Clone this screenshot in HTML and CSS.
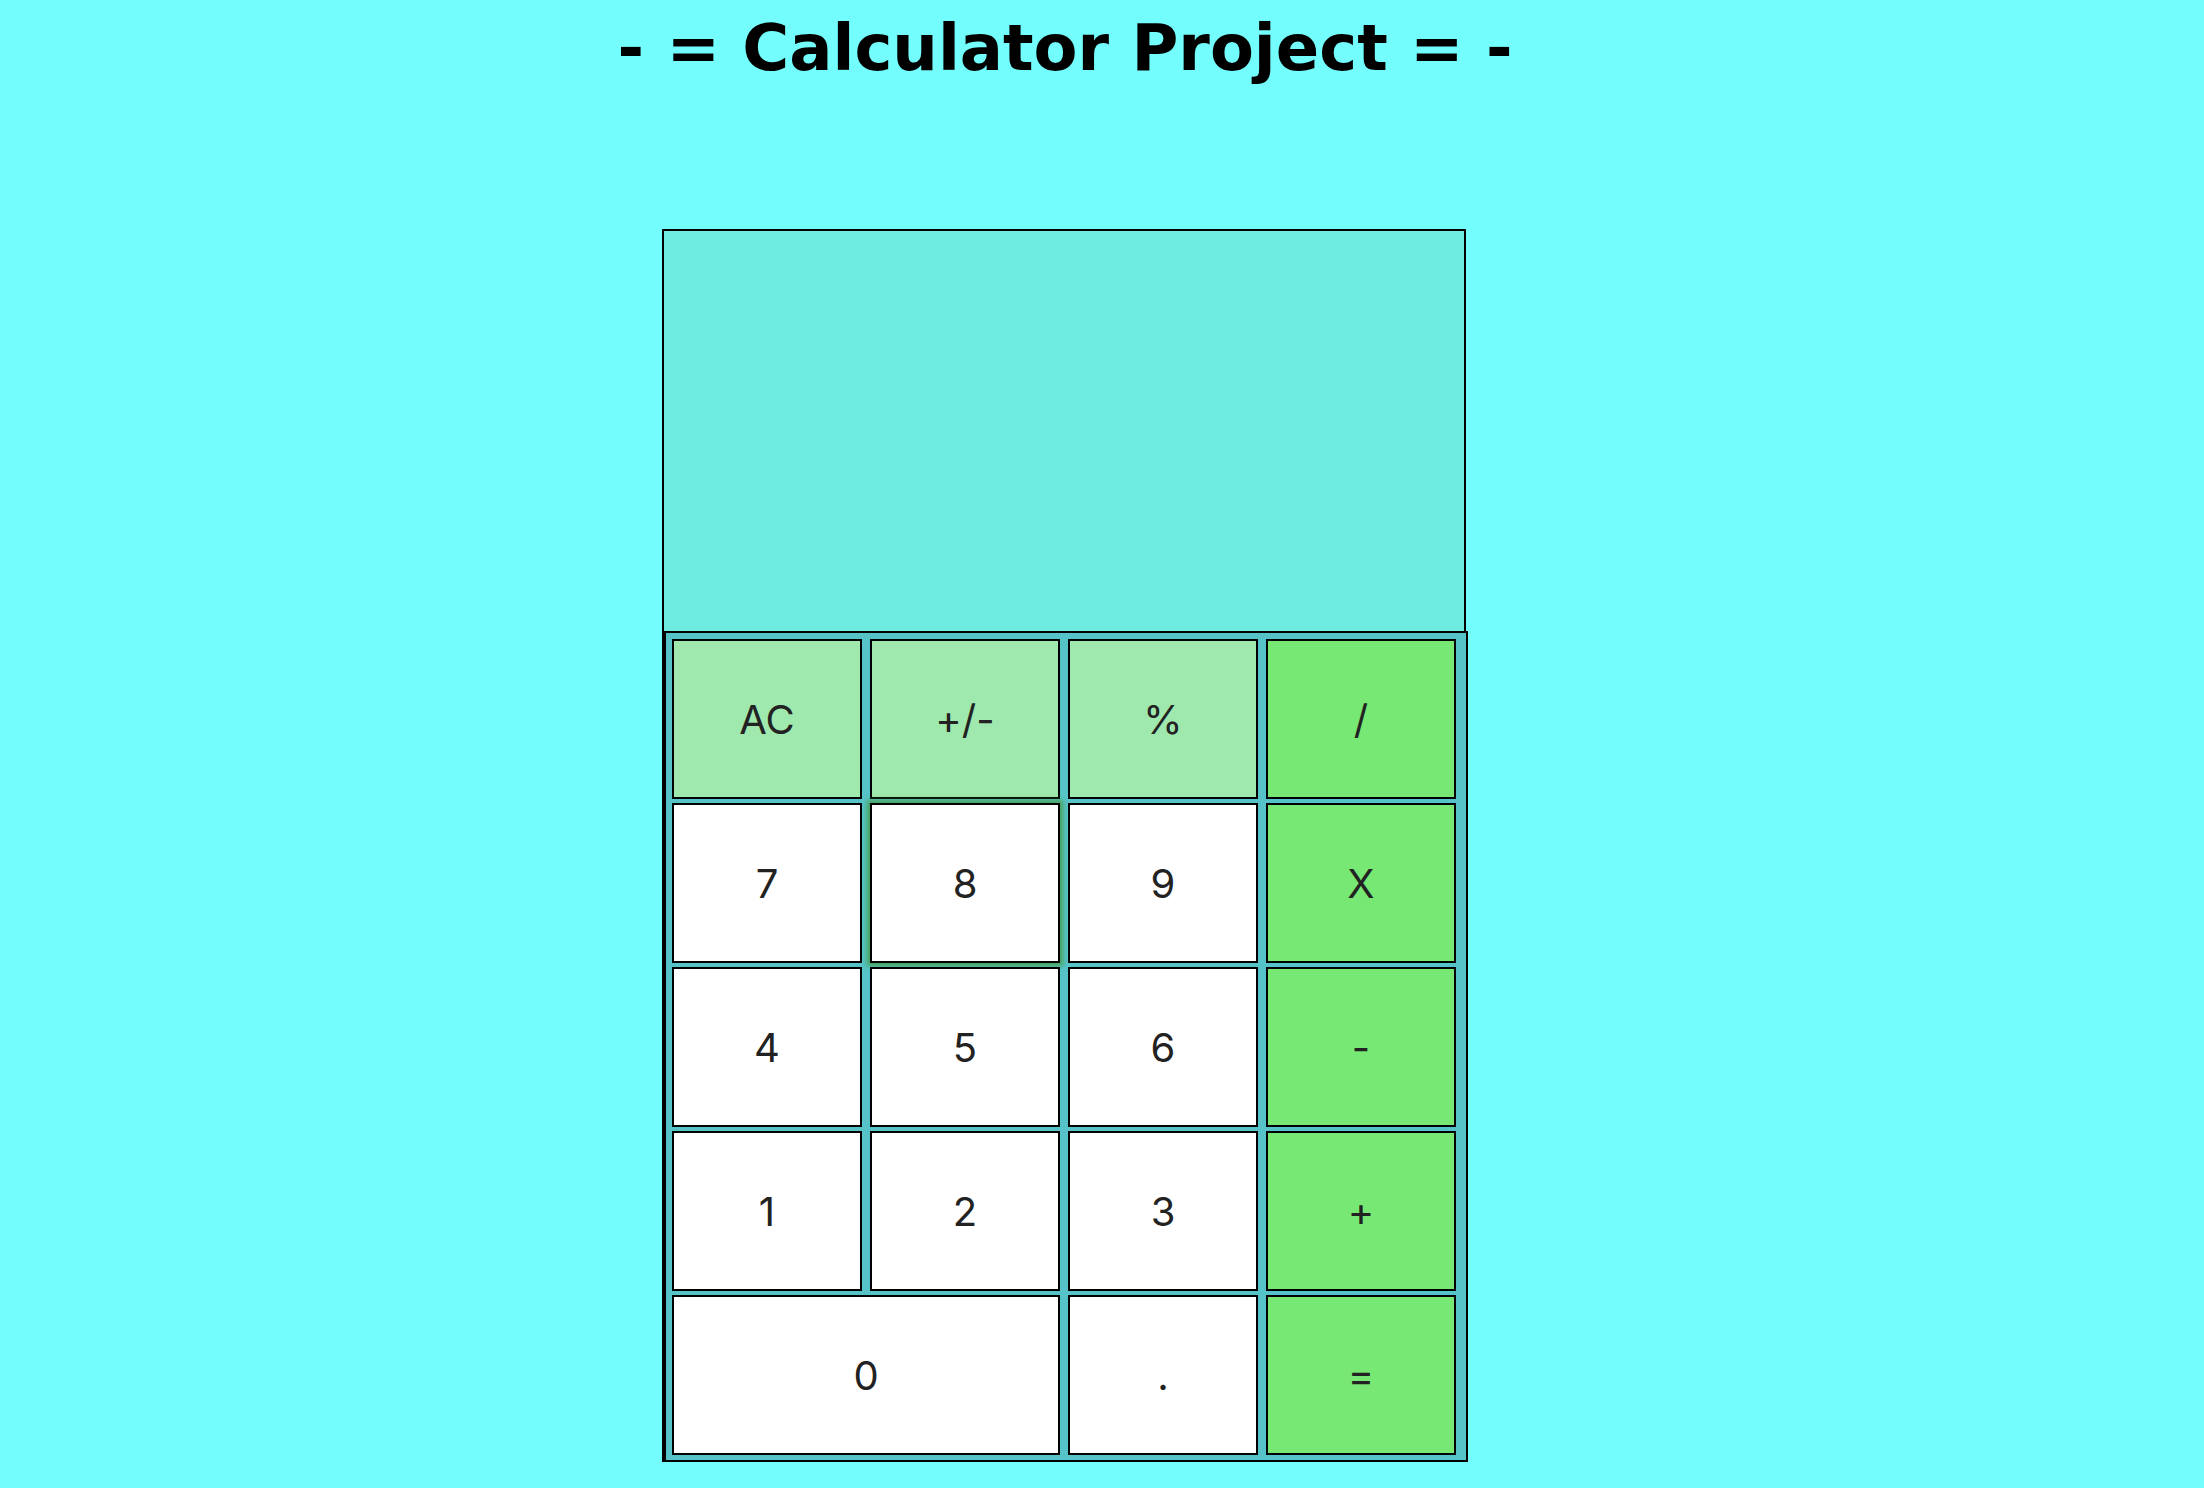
FILE: index.html
```html
<!DOCTYPE html>
<html lang="en">
<head>
<meta charset="utf-8">
<title>Calculator Project</title>
<link rel="stylesheet" href="styles.css">
</head>
<body>
<div class="page">
  <h1 class="title">- = Calculator Project = -</h1>
  <div class="calculator">
    <div class="display"></div>
    <div class="keypad">
      <button class="key key-func">AC</button>
      <button class="key key-func">+/-</button>
      <button class="key key-func">%</button>
      <button class="key key-op">/</button>
      <button class="key">7</button>
      <button class="key key-hover">8</button>
      <button class="key">9</button>
      <button class="key key-op">X</button>
      <button class="key">4</button>
      <button class="key">5</button>
      <button class="key">6</button>
      <button class="key key-op">-</button>
      <button class="key">1</button>
      <button class="key">2</button>
      <button class="key">3</button>
      <button class="key key-op">+</button>
      <button class="key key-wide">0</button>
      <button class="key">.</button>
      <button class="key key-op">=</button>
    </div>
  </div>
</div>
</body>
</html>
```
FILE: styles.css
```css
html, body {
  background: #74fdfd;
}
body {
  margin: 8px;
}
.page {
  width: 2114px;
  display: flex;
  flex-direction: column;
  align-items: center;
}
.title {
  margin: 3px 0 0;
  font-family: "DejaVu Sans", sans-serif;
  font-weight: bold;
  font-size: 64px;
  line-height: 75px;
  color: #000;
}
.calculator {
  margin-top: 143px;
  width: 806px;
  display: flex;
  flex-direction: column;
}
.display {
  box-sizing: border-box;
  width: 804px;
  height: 402px;
  border: 2px solid #000;
  border-bottom: none;
  background: #6eece2;
}
.keypad {
  box-sizing: border-box;
  width: 806px;
  border: 2px solid #000;
  border-left-width: 4px;
  padding: 6px 10px 5px 6px;
  background: #56c3c9;
  display: grid;
  grid-template-columns: repeat(4, 190px);
  grid-auto-rows: 160px;
  column-gap: 8px;
  row-gap: 4px;
}
.key {
  box-sizing: border-box;
  margin: 0;
  padding: 0;
  border: 2px solid #000;
  border-radius: 0;
  background: #ffffff;
  color: #222222;
  font-family: "Inter", "Liberation Sans", sans-serif;
  font-size: 40px;
  font-weight: 400;
  display: flex;
  align-items: center;
  justify-content: center;
}
.key-func {
  background: #9fe9ae;
}
.key-op {
  background: #77e874;
}
.key-wide {
  grid-column: span 2;
}
.key-hover {
  box-shadow: 0 0 5px 3px rgba(70, 150, 50, 0.75);
}
```
